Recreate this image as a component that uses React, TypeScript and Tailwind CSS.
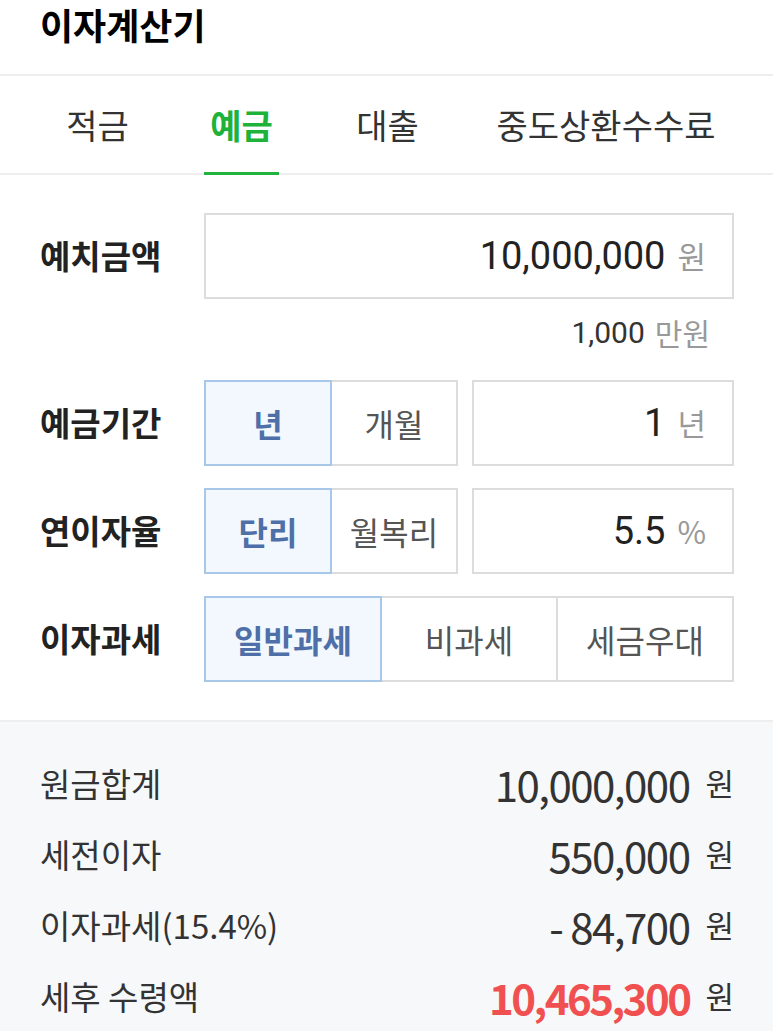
import React from "react";

const KR = { fontFamily: '"Noto Sans CJK KR", "Noto Sans", sans-serif' };
const RB = { fontFamily: 'Roboto, "Noto Sans CJK KR", sans-serif' };

function Seg({
  items,
  selected,
  widths,
}: {
  items: string[];
  selected: number;
  widths: string[];
}) {
  return (
    <div className="flex h-[86px]">
      {items.map((t, i) => {
        const sel = i === selected;
        return (
          <div
            key={t}
            className={
              (sel
                ? "z-10 border-[#a7c8e8] bg-[#f2f8fe] text-[#4f6fa8] font-bold "
                : "border-[#dcdcdc] bg-white text-[#555] ") +
              (i > 0 ? "-ml-[2px] " : "") +
              widths[i] +
              " flex items-center justify-center border-2 text-[32px]"
            }
          >
            {t}
          </div>
        );
      })}
    </div>
  );
}

function InputBox({ value, unit, className }: { value: string; unit: string; className: string }) {
  return (
    <div
      className={
        className +
        " flex h-[86px] items-center justify-end gap-[12px] border-2 border-[#dcdcdc] bg-white pr-[26px]"
      }
    >
      <span style={RB} className="text-[38px] text-[#222]">
        {value}
      </span>
      <span className="text-[31px] text-[#999]">{unit}</span>
    </div>
  );
}

function Label({ children }: { children: React.ReactNode }) {
  return <div className="w-[164px] shrink-0 text-[33px] font-bold text-[#222]">{children}</div>;
}

function ResultRow({
  label,
  value,
  red,
}: {
  label: string;
  value: string;
  red?: boolean;
}) {
  return (
    <div className="flex h-[71px] items-center justify-between">
      <span className="text-[33px] text-[#333]">{label}</span>
      <span className="flex items-center gap-[16px]">
        <span
          className={
            (red
              ? "font-bold text-[#f15050] tracking-[-2.5px] "
              : "text-[#333] tracking-[-1.5px] ") + "text-[42px]"
          }
        >
          {value}
        </span>
        <span className="text-[31px] text-[#333]">원</span>
      </span>
    </div>
  );
}

export default function App() {
  return (
    <div style={KR} className="w-[773px] h-[1031px] overflow-hidden bg-white">
      {/* Header */}
      <div className="h-[76px] border-b-2 border-[#eeeeee] pl-[40px] pt-[1px]">
        <div className="text-[36px] font-bold leading-[46px] text-black">이자계산기</div>
      </div>

      {/* Tabs */}
      <div className="flex h-[99px] items-stretch border-b-2 border-[#eeeeee] pl-[60px]">
        <div className="flex w-[75px] items-center justify-center text-[34px] text-[#333]">적금</div>
        <div className="relative ml-[69px] flex w-[75px] items-center justify-center text-[34px] font-bold text-[#1db33b]">
          예금
          <div className="absolute -bottom-[2px] left-0 h-[3px] w-full bg-[#22b33f]" />
        </div>
        <div className="ml-[71px] flex w-[75px] items-center justify-center text-[34px] text-[#333]">대출</div>
        <div className="ml-[64px] flex w-[234px] items-center justify-center text-[34px] text-[#333]">
          중도상환수수료
        </div>
      </div>

      {/* Form */}
      <div className="px-[39px] pl-[40px] pt-[38px] pb-[38px]">
        <div className="flex items-center">
          <Label>예치금액</Label>
          <InputBox value="10,000,000" unit="원" className="flex-1" />
        </div>
        <div className="flex h-[81px] items-center justify-end gap-[10px] pb-[14px] pr-[24px]">
          <span style={RB} className="text-[30px] text-[#333]">
            1,000
          </span>
          <span className="text-[30px] text-[#999]">만원</span>
        </div>
        <div className="flex flex-col gap-[22px]">
          <div className="flex items-center">
            <Label>예금기간</Label>
            <Seg items={["년", "개월"]} selected={0} widths={["w-[128px]", "w-[128px]"]} />
            <InputBox value="1" unit="년" className="ml-[14px] flex-1" />
          </div>
          <div className="flex items-center">
            <Label>연이자율</Label>
            <Seg items={["단리", "월복리"]} selected={0} widths={["w-[128px]", "w-[128px]"]} />
            <InputBox value="5.5" unit="%" className="ml-[14px] flex-1" />
          </div>
          <div className="flex items-center">
            <Label>이자과세</Label>
            <Seg
              items={["일반과세", "비과세", "세금우대"]}
              selected={0}
              widths={["w-[178px]", "w-[178px]", "w-[178px]"]}
            />
          </div>
        </div>
      </div>

      {/* Results */}
      <div className="border-t-2 border-[#eeeeee] bg-[#f7f8fa] px-[39px] pl-[40px] pt-[26px] pb-[40px]">
        <ResultRow label="원금합계" value="10,000,000" />
        <ResultRow label="세전이자" value="550,000" />
        <ResultRow label="이자과세(15.4%)" value="- 84,700" />
        <ResultRow label="세후 수령액" value="10,465,300" red />
      </div>
    </div>
  );
}
